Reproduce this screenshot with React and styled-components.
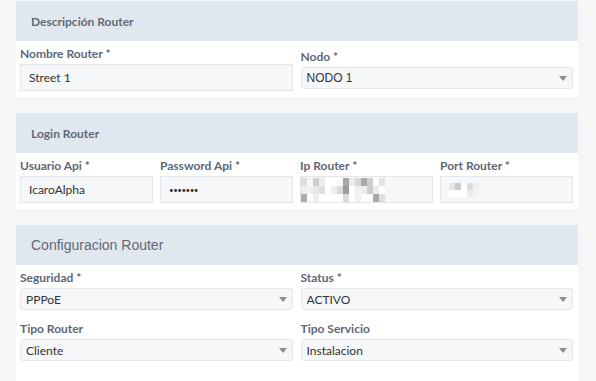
import React from 'react'
import styled, { createGlobalStyle } from 'styled-components'

const GlobalStyle = createGlobalStyle`
  html, body {
    margin: 0;
    padding: 0;
    background: #f5f6f8;
  }
  body {
    font-family: Lato, "Liberation Sans", sans-serif;
  }
`

const Page = styled.div`
  display: flex;
  flex-direction: column;
  gap: 16px;
  padding: 1px 18px 0 16px;
  min-height: 381px;
  box-sizing: border-box;
  background: #f5f6f8;
`
const Card = styled.section`
  background: #ffffff;
  display: flex;
  flex-direction: column;
  flex: ${(p) => (p.$grow ? 1 : 'none')};
`
const CardHeader = styled.div`
  height: 40px;
  display: flex;
  align-items: center;
  padding-left: 15px;
  background: #e1e7ee;
  color: #5f6a77;
  font-family: ${(p) => (p.$big ? '"Liberation Sans", Arial, sans-serif' : 'Lato, "Liberation Sans", sans-serif')};
  font-size: ${(p) => (p.$big ? '14px' : '12px')};
  font-weight: ${(p) => (p.$big ? 400 : 700)};
`
const CardBody = styled.div`
  padding: 5px 5px 6px 4px;
  display: flex;
  flex-direction: column;
  gap: 11px;
`
const Row = styled.div`
  display: grid;
  grid-template-columns: repeat(${(p) => p.$cols}, minmax(0, 1fr));
  column-gap: ${(p) => (p.$cols === 4 ? '7px' : '8px')};
  align-items: start;
`
const Field = styled.div`
  display: flex;
  flex-direction: column;
  min-width: 0;
  padding-top: ${(p) => p.$shift || 0}px;
`
const Label = styled.label`
  font-size: 12px;
  line-height: 15px;
  font-weight: 700;
  color: #5d6876;
  margin-bottom: 3px;
  white-space: nowrap;
`
const Input = styled.input`
  width: 100%;
  min-width: 0;
  height: 27px;
  box-sizing: border-box;
  border: 1px solid #e3e7eb;
  background: #f5f7f9;
  padding: 0 8px;
  font-family: Lato, "Liberation Sans", sans-serif;
  font-size: ${(p) => (p.type === 'password' ? '8px' : '12px')};
  letter-spacing: ${(p) => (p.type === 'password' ? '-0.5px' : '0')};
  color: #333;
  outline: none;
`
const Masked = styled.div`
  height: 27px;
  box-sizing: border-box;
  border: 1px solid #e3e7eb;
  background: #f5f7f9;
  display: flex;
  align-items: center;
  padding-left: ${(p) => p.$pad}px;
`
const SelectWrap = styled.div`
  height: 22px;
  box-sizing: border-box;
  display: flex;
  align-items: center;
  border: 1px solid #e6e9ec;
  border-radius: 3px;
  background: #f6f7f9;
  padding-right: 5px;
`
const Select = styled.select`
  flex: 1;
  min-width: 0;
  appearance: none;
  border: none;
  background: transparent;
  outline: none;
  padding: 0 5px;
  height: 20px;
  font-family: ${(p) => (p.$arial ? '"Liberation Sans", Arial, sans-serif' : 'Lato, "Liberation Sans", sans-serif')};
  font-size: 12px;
  color: #333;
`

const Caret = () => (
  <svg width="8" height="5" viewBox="0 0 8 5">
    <path d="M0 0h8L4 5z" fill="#8a8d90" />
  </svg>
)

const ipBlocks = [
  ['#dcdcdc', '#f6f6f6', '#cfcfcf', '#ececec', '#fff', '#fff', '#fbfbfb', '#a9a9a9', '#ececec', '#d7d7d7', '#aaaaaa', '#cdcdcd', '#fff', '#e4e4e4'],
  ['#ededed', '#f1f1f1', '#e6e6e6', '#dedede', '#fff', '#eeeeee', '#dcdcdc', '#9c9c9c', '#fff', '#f1f1f1', '#ededed', '#cdcdcd', '#ececec', '#fff'],
  ['#acacac', '#fff', '#eeeeee', '#fff', '#fff', '#fff', '#fff', '#dcdcdc', '#fff', '#f1f1f1', '#fff', '#fff', '#a9a9a9', '#dedede'],
]
const portBlocks = [
  ['#e6e6e6', '#c9c9c9', '#fff', '#dcdcdc', '#f1f1f1'],
  ['#fff', '#fff', '#fff', '#ececec', '#f4f4f4'],
]

const Mosaic = ({ blocks, h }) => (
  <svg width={blocks[0].length * 6} height={blocks.length * h}>
    {blocks.map((row, r) =>
      row.map((c, i) => (
        <rect key={r + '-' + i} x={i * 6} y={r * h} width="6" height={h} fill={c} />
      ))
    )}
  </svg>
)

const SelectField = ({ label, value, arial, shift }) => (
  <Field $shift={shift}>
    <Label>{label}</Label>
    <SelectWrap>
      <Select $arial={arial} defaultValue={value}>
        <option>{value}</option>
      </Select>
      <Caret />
    </SelectWrap>
  </Field>
)

export default function App() {
  return (
    <>
      <GlobalStyle />
      <Page>
        <Card>
          <CardHeader>Descripción Router</CardHeader>
          <CardBody>
            <Row $cols={2}>
              <Field>
                <Label>Nombre Router *</Label>
                <Input defaultValue="Street 1" />
              </Field>
              <SelectField label="Nodo *" value="NODO 1" arial shift={3} />
            </Row>
          </CardBody>
        </Card>

        <Card>
          <CardHeader>Login Router</CardHeader>
          <CardBody>
            <Row $cols={4}>
              <Field>
                <Label>Usuario Api *</Label>
                <Input defaultValue="IcaroAlpha" />
              </Field>
              <Field>
                <Label>Password Api *</Label>
                <Input type="password" defaultValue="1234567" />
              </Field>
              <Field>
                <Label>Ip Router *</Label>
                <Masked $pad={0}>
                  <Mosaic blocks={ipBlocks} h={8} />
                </Masked>
              </Field>
              <Field>
                <Label>Port Router *</Label>
                <Masked $pad={8}>
                  <Mosaic blocks={portBlocks} h={7} />
                </Masked>
              </Field>
            </Row>
          </CardBody>
        </Card>

        <Card $grow>
          <CardHeader $big>Configuracion Router</CardHeader>
          <CardBody>
            <Row $cols={2}>
              <SelectField label="Seguridad *" value="PPPoE" />
              <SelectField label="Status *" value="ACTIVO" />
            </Row>
            <Row $cols={2}>
              <SelectField label="Tipo Router" value="Cliente" />
              <SelectField label="Tipo Servicio" value="Instalacion" />
            </Row>
          </CardBody>
        </Card>
      </Page>
    </>
  )
}
